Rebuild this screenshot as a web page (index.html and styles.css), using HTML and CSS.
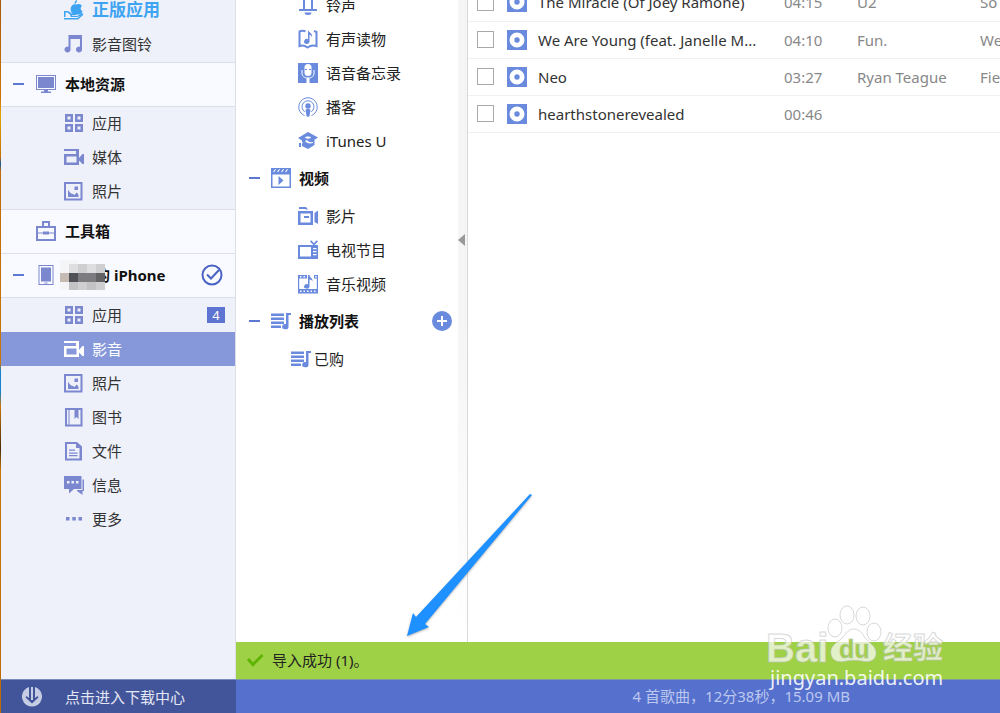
FILE: index.html
```html
<!DOCTYPE html>
<html lang="zh-CN">
<head>
    <meta charset="UTF-8" />
    <meta name="viewport" content="width=device-width, initial-scale=1.0"/>
    <title>影音</title>
    <link rel="stylesheet" href="styles.css">
</head>
<body>
<svg class="sprite" aria-hidden="true">
    <symbol id="i-apple" viewBox="0 0 20 20">
        <path d="M13 0c.2 2-1 3.600-2.600 3.800C10.300 2 11.500.5 13 0zM13 4.500c2-1 4-.3 5 1.500-2 1.300-1.600 4.200.6 5.200-.8 2-2 3.300-3.300 3.300H9C7 12.500 6 9.500 7 7c1-2.300 3-3.500 6-2.500z"/>
        <path d="M0 11h3c2 0 3 1 4.500 2.500h4c1.500 0 1.500 1.500 0 1.800H8v.7h5l4.500-2.500c1.500-.6 2.500.7 1.300 1.800L14 19.500H0V18h13.500l3-2.400-3 1.400H6.500v-2L3.500 12.500H1.500V17H0z"/>
    </symbol>
    <symbol id="i-music" viewBox="0 0 20 20">
        <path d="M4.500 1H18v14.500a3 3 0 1 1-2-2.800V5H6.500v10.500a3 3 0 1 1-2-2.800z"/>
    </symbol>
    <symbol id="i-monitor" viewBox="0 0 20 20">
        <path fill-rule="evenodd" d="M0 1h20v15H0zM1 2v13h18V2z"/>
        <path d="M2 3h16v11H2zM8 16h4v1.500h3V19H5v-1.500h3z"/>
    </symbol>
    <symbol id="i-grid" viewBox="0 0 20 20">
        <path fill-rule="evenodd" d="M1 1h8v8H1zM3.500 3.500v3h3v-3zM11 1h8v8h-8zM13.500 3.500v3h3v-3zM1 11h8v8H1zM3.500 13.500v3h3v-3zM11 11h8v8h-8zM13.500 13.500v3h3v-3z"/>
    </symbol>
    <symbol id="i-media" viewBox="0 0 20 20">
        <path fill-rule="evenodd" d="M0 2h15v16H0V7h12V4H0zM2.500 9.500v6h10v-6zM15 11l3.500-4H20v10h-1.500L15 13.500z"/>
    </symbol>
    <symbol id="i-photo" viewBox="0 0 20 20">
        <path fill-rule="evenodd" d="M0 1h18.500v18.500H0zM2 3v14.500h14.500V3z"/>
        <path d="M10.500 5.500h3.500V9h-3.500zM4 9l3 3.500 2 .5 1.500 1 2-2.500 2 2V16H4z"/>
    </symbol>
    <symbol id="i-toolbox" viewBox="0 0 20 20">
        <path fill-rule="evenodd" d="M6 0h8v5h6v15H0V5h6zM8 2v3h4V2zM2 7v4.500h5V10.500h6v1H18V7zM2 12.500V18h16v-5.500h-5v1H7v-1z"/>
    </symbol>
    <symbol id="i-phone" viewBox="0 0 20 20">
        <path fill-rule="evenodd" d="M2.500 0h15v20h-15zM3.500 1v18h13V1z"/>
        <path d="M5 2.500h10v14H5zM8.500 17.500h3v1h-3z"/>
    </symbol>
    <symbol id="i-book" viewBox="0 0 20 20">
        <path fill-rule="evenodd" d="M1 1h17.500v18.500H1zM3 3v14.500h1.500V3zM5.500 3v14.500h11V3h-2v9l-2-2-2 2V3z"/>
    </symbol>
    <symbol id="i-file" viewBox="0 0 20 20">
        <path fill-rule="evenodd" d="M1 1h12l5 4.500V19.500H1zM3 3v14.500h12.500V7H12V3z"/>
        <path d="M5 8.500h6v1.200H5zM5 11.500h8.500v1.200H5zM5 14h8.500v1.200H5z"/>
    </symbol>
    <symbol id="i-chat" viewBox="0 0 20 20">
        <path fill-rule="evenodd" d="M0 1h17.500v13H10l-5 4.500V14H0zM3 6v2.500h2.500V6zM7.500 6v2.500H10V6zM12 6v2.500h2.500V6z"/>
        <path d="M18.500 4.500H20V16h-1.500v4L13 16v-1h5.500z"/>
    </symbol>
    <symbol id="i-more" viewBox="0 0 20 20">
        <path d="M2 8h3.500v3.500H2zM8.300 8h3.500v3.500H8.300zM14.500 8H18v3.500h-3.500z"/>
    </symbol>
    <symbol id="i-check" viewBox="0 0 22 22">
        <circle class="line" cx="11" cy="11" r="9.500"/>
        <path class="line" d="M6 10.500l4 4 8-8.500"/>
    </symbol>
    <symbol id="i-bell" viewBox="0 0 20 20">
        <path class="line" d="M6 15V6c0-2.500 2-4 4-4s4 1.500 4 4v9M1 15h18"/>
        <path d="M6.500 17.500h7a3.500 2.500 0 0 1-7 0z"/>
    </symbol>
    <symbol id="i-audiobook" viewBox="0 0 20 20">
        <path class="line" d="M7.500 2.500C6 1.500 3.500 1.500 1.500 2.500v14.500c2.500-1 5-.8 8 1.500 3-2.300 6-2.500 9-1.500V3L16 2"/>
        <path d="M10 1c.5 2.500 5 3 4 7.500-.5-2-1.500-2.500-2.500-2.700V12.500a2.700 2.500 0 1 1-1.500-2.300z"/>
    </symbol>
    <symbol id="i-memo" viewBox="0 0 20 20">
        <path d="M0 0h20v20H0z"/>
        <rect class="paper" x="6.500" y="1" width="7" height="12" rx="3.500"/>
        <path class="paper-line" d="M4 7v3c0 3.500 2.500 5 6 5s6-1.500 6-5V7"/>
        <path class="paper" d="M8.500 15h3v5h-3z"/>
        <path d="M7 6h2v1H7zM11 6h2v1h-2z"/>
    </symbol>
    <symbol id="i-podcast" viewBox="0 0 20 20">
        <path class="thin" d="M6.500 18.500a9.200 9.200 0 1 1 7 0M6.800 14.800a6 6 0 1 1 6.400 0"/>
        <circle cx="10" cy="9" r="2.700"/>
        <path d="M7.500 13c0-1.500 5-1.500 5 0l-1 6c-.3 1-2.700 1-3 0z"/>
    </symbol>
    <symbol id="i-itunesu" viewBox="0 0 20 20">
        <path fill-rule="evenodd" d="M10 1l10 5.500-3.500 2.300V14l-6.500 4-6-3v-2.500l1-.5-1-1V9.500L0 7zM7 6.500c0 1.500 6 1.500 6 0s-6-1.500-6 0zM7 10c1.500 2 4 3 8 2v-1c-2.500.5-4.500 0-6-2z"/>
        <path d="M1 12h2v4H1z"/>
    </symbol>
    <symbol id="i-video" viewBox="0 0 20 20">
        <path fill-rule="evenodd" d="M0 0h20v20H0zM1.500 6.500v12h17v-12zM2 4h1.200l2-2.800H4zM6 4h1.200l2-2.800H8zM10 4h1.200l2-2.800H12zM14 4h1.200l2-2.800H16z"/>
        <path d="M7.500 8l5 4.500-5 4.500z"/>
    </symbol>
    <symbol id="i-movie" viewBox="0 0 20 20">
        <path fill-rule="evenodd" d="M0 5h15v14H0zM2.500 7.500v9h10v-9zM6 10h5v2H6zM1 1h7l2 2.500H8L7 3H1zM16.500 7L20 4.500V18l-3.500-2z"/>
    </symbol>
    <symbol id="i-tv" viewBox="0 0 20 20">
        <path fill-rule="evenodd" d="M0 5h15.500L12 1.500l1.200-1.200 2.800 3 2.600-3L20 1.500 16.500 5H20v14H0zM2 7v9.500h11V7zM15 8v1.200h3.500V8zM15 11v1.200h3.500V11zM15 14v1.200h3.500V14z"/>
    </symbol>
    <symbol id="i-mv" viewBox="0 0 20 20">
        <path fill-rule="evenodd" d="M0 1h9v3.500H1.200V15h17.600V4.500H16V1h4v18.500H0zM2 2v1.500h1.500V2zM5.500 2v1.500H7V2zM17.200 2v1.500h1.500V2zM2 16.500V18h1.500v-1.500zM5.500 16.500V18H7v-1.500zM9 16.500V18h1.500v-1.500zM12.500 16.500V18H14v-1.500zM16 16.500V18h1.500v-1.500z"/>
        <path d="M10 1h1.500c0 2.500 3.500 3 3 6.500-.7-1.500-1.500-1.800-3-2v7a2.700 2.300 0 1 1-1.500-2.200z"/>
    </symbol>
    <symbol id="i-playlist" viewBox="0 0 20 20">
        <path d="M0 2.500h13V5H0zM0 6.500h13V9H0zM0 10.500h13V13H0zM0 14.500h10V17H0zM15 2h5v2h-2.500v11.500a3.200 2.700 0 1 1-2.500-2.500z"/>
    </symbol>
    <symbol id="i-plus" viewBox="0 0 20 20">
        <path fill-rule="evenodd" d="M10 0a10 10 0 1 1 0 20 10 10 0 0 1 0-20zM9 5v4H5v2h4v4h2v-4h4V9h-4V5z"/>
    </symbol>
    <symbol id="i-disc" viewBox="0 0 20 20">
        <path fill-rule="evenodd" d="M0 0h20v20H0zM10 2.500a7.500 7.500 0 1 0 0 15 7.500 7.500 0 0 0 0-15z"/>
        <circle cx="10" cy="10" r="2.700"/>
    </symbol>
    <symbol id="i-download" viewBox="0 0 20 20">
        <path fill-rule="evenodd" d="M7 0a10 10 0 1 0 6 0v11l2.500-2 1 1.500-6.500 6-6.500-6L4.500 9 7 11z"/>
        <path d="M9 0h2v13H9z"/>
    </symbol>
</svg>

<div class="app">
    <nav class="sidebar">
        <ul class="menu menu-top">
            <li><a class="promo" href="#"><svg class="icon"><use href="#i-apple"/></svg>正版应用</a></li>
            <li><a href="#"><svg class="icon"><use href="#i-music"/></svg>影音图铃</a></li>
        </ul>

        <div class="section">
            <button class="toggle" aria-label="收起"></button>
            <svg class="icon"><use href="#i-monitor"/></svg>
            <h2>本地资源</h2>
        </div>
        <ul class="menu">
            <li><a href="#"><svg class="icon"><use href="#i-grid"/></svg>应用</a></li>
            <li><a href="#"><svg class="icon"><use href="#i-media"/></svg>媒体</a></li>
            <li><a href="#"><svg class="icon"><use href="#i-photo"/></svg>照片</a></li>
        </ul>

        <div class="section no-toggle">
            <svg class="icon"><use href="#i-toolbox"/></svg>
            <h2>工具箱</h2>
        </div>

        <div class="section">
            <button class="toggle" aria-label="收起"></button>
            <svg class="icon"><use href="#i-phone"/></svg>
            <h2 class="device">
                <svg class="mosaic" viewBox="0 0 45 30" aria-hidden="true">
                    <path fill="#f5f5f7" d="M0 0h18v4H0zM0 4h9v9H0zM0 22h9v8H0z"/>
                    <path fill="#dedee0" d="M9 4h9v9H9zM27 4h9v9h-9z"/>
                    <path fill="#cfcfd1" d="M18 4h9v9h-9zM36 4h9v9h-9zM18 22h9v8h-9zM36 22h9v8h-9z"/>
                    <path fill="#c3c3c6" d="M9 22h9v8H9zM27 22h9v8h-9z"/>
                    <path fill="#c5bbb2" d="M0 13h9v9H0z"/>
                    <path fill="#505156" d="M9 13h9v9H9z"/>
                    <path fill="#7c7c80" d="M18 13h18v9H18z"/>
                    <path fill="#636365" d="M36 13h9v9h-9z"/>
                </svg>的 iPhone
            </h2>
            <svg class="connected"><use href="#i-check"/></svg>
        </div>
        <ul class="menu menu-device">
            <li><a href="#"><svg class="icon"><use href="#i-grid"/></svg>应用<span class="badge">4</span></a></li>
            <li><a class="active" href="#"><svg class="icon"><use href="#i-media"/></svg>影音</a></li>
            <li><a href="#"><svg class="icon"><use href="#i-photo"/></svg>照片</a></li>
            <li><a href="#"><svg class="icon"><use href="#i-book"/></svg>图书</a></li>
            <li><a href="#"><svg class="icon"><use href="#i-file"/></svg>文件</a></li>
            <li><a href="#"><svg class="icon"><use href="#i-chat"/></svg>信息</a></li>
            <li><a href="#"><svg class="icon"><use href="#i-more"/></svg>更多</a></li>
        </ul>
    </nav>

    <div class="content">
        <div class="panes">
            <nav class="library">
                <div class="library-list">
                    <ul>
                        <li><a href="#"><svg class="icon"><use href="#i-bell"/></svg>铃声</a></li>
                        <li><a href="#"><svg class="icon"><use href="#i-audiobook"/></svg>有声读物</a></li>
                        <li><a href="#"><svg class="icon"><use href="#i-memo"/></svg>语音备忘录</a></li>
                        <li><a href="#"><svg class="icon"><use href="#i-podcast"/></svg>播客</a></li>
                        <li><a href="#"><svg class="icon"><use href="#i-itunesu"/></svg>iTunes U</a></li>
                    </ul>
                    <div class="group">
                        <button class="toggle" aria-label="收起"></button>
                        <svg class="icon"><use href="#i-video"/></svg>
                        <h2>视频</h2>
                    </div>
                    <ul>
                        <li><a href="#"><svg class="icon"><use href="#i-movie"/></svg>影片</a></li>
                        <li><a href="#"><svg class="icon"><use href="#i-tv"/></svg>电视节目</a></li>
                        <li><a href="#"><svg class="icon"><use href="#i-mv"/></svg>音乐视频</a></li>
                    </ul>
                    <div class="group">
                        <button class="toggle" aria-label="收起"></button>
                        <svg class="icon"><use href="#i-playlist"/></svg>
                        <h2>播放列表</h2>
                        <button class="add" aria-label="新建"><svg class="icon"><use href="#i-plus"/></svg></button>
                    </div>
                    <ul class="playlists">
                        <li><a href="#"><svg class="icon"><use href="#i-playlist"/></svg>已购</a></li>
                    </ul>
                </div>
                <button class="splitter" aria-label="收起"></button>
            </nav>

            <main class="songs">
                <table>
                    <colgroup>
                        <col class="col-check"><col class="col-icon"><col class="col-title">
                        <col class="col-time"><col class="col-artist"><col>
                    </colgroup>
                    <tbody>
                        <tr>
                            <td><input type="checkbox" aria-label="The Miracle (Of Joey Ramone)"></td>
                            <td><svg class="icon"><use href="#i-disc"/></svg></td>
                            <td class="title">The Miracle (Of Joey Ramone)</td>
                            <td>04:15</td><td>U2</td><td>So</td>
                        </tr>
                        <tr>
                            <td><input type="checkbox" aria-label="We Are Young"></td>
                            <td><svg class="icon"><use href="#i-disc"/></svg></td>
                            <td class="title">We Are Young (feat. Janelle M...</td>
                            <td>04:10</td><td>Fun.</td><td>We</td>
                        </tr>
                        <tr>
                            <td><input type="checkbox" aria-label="Neo"></td>
                            <td><svg class="icon"><use href="#i-disc"/></svg></td>
                            <td class="title">Neo</td>
                            <td>03:27</td><td>Ryan Teague</td><td>Fie</td>
                        </tr>
                        <tr>
                            <td><input type="checkbox" aria-label="hearthstonerevealed"></td>
                            <td><svg class="icon"><use href="#i-disc"/></svg></td>
                            <td class="title">hearthstonerevealed</td>
                            <td>00:46</td><td></td><td></td>
                        </tr>
                    </tbody>
                </table>
            </main>
        </div>

        <div class="notice" role="status">
            <svg class="tick" viewBox="0 0 18 14"><path d="M2 6l5 5.500L16.500 2"/></svg>
            导入成功 (1)。
            <svg class="pointer" viewBox="0 0 130 148" aria-hidden="true">
                <path d="M127 1l2 1L22 131l4 3-22 9 6-23 3 4z"/>
            </svg>
        </div>
    </div>

    <a class="downloads" href="#"><svg class="icon"><use href="#i-download"/></svg>点击进入下载中心</a>
    <footer class="status">4 首歌曲，12分38秒，15.09 MB</footer>
</div>

<svg class="watermark" viewBox="0 0 184 88" role="img" aria-label="Baidu 经验">
    <g class="mark">
        <text class="brand" x="1" y="57">Bai</text>
        <ellipse cx="70" cy="23" rx="7" ry="9"/>
        <ellipse cx="82" cy="10" rx="7" ry="9"/>
        <ellipse cx="98" cy="11" rx="7" ry="9"/>
        <ellipse cx="109" cy="27" rx="7" ry="9"/>
        <path class="pad" d="M89 24c-7 0-9 7-14 11-6 4-10 8-9 14 1 7 8 9 15 7 5-1 11-1 16 0 8 2 14-1 14-8 0-6-5-9-9-13-4-4-6-11-13-11z"/>
        <text class="du" x="74" y="53">du</text>
        <text class="jingyan" x="118" y="53">经验</text>
    </g>
    <text class="site" x="5" y="80">jingyan.baidu.com</text>
</svg>
</body>
</html>
```
FILE: styles.css
```css
* {
    margin: 0;
    padding: 0;
    box-sizing: border-box;
}

body {
    background-color: #fff;
    color: #222;
    font-family: "Noto Sans", "Noto Sans CJK SC", sans-serif;
    font-size: 15px;
    line-height: 20px;
    overflow: hidden;
}

ul {
    list-style: none;
}

a {
    color: inherit;
    text-decoration: none;
}

h2 {
    font-size: 15px;
    font-weight: bold;
    color: #111;
}

button {
    border: none;
    background: none;
    font: inherit;
    cursor: pointer;
}

.sprite {
    display: none;
}

.icon {
    display: block;
    flex: none;
    width: 20px;
    height: 20px;
    fill: currentColor;
}

.line,
.thin {
    fill: none;
    stroke: currentColor;
    stroke-width: 2px;
}

.thin {
    stroke-width: 1px;
}

.paper {
    fill: #fff;
}

.paper-line {
    fill: none;
    stroke: #fff;
    stroke-width: 1px;
}

.app {
    display: grid;
    grid-template-columns: 235px 1fr;
    grid-template-rows: 1fr 34px;
    height: 100vh;
    padding-left: 1px;
    background: linear-gradient(#a85a08, #cf7405 14%, #e0a500 16%, #c66f05 22%, #0f5aa5 23%, #c06a08 24%, #c87606 51%, #1483cf 52%, #1483cf 55%, #c87606 57%, #4a2c08 63%, #c87606 66%, #c06a08);
}

/* Sidebar */
.sidebar {
    min-height: 0;
    overflow: hidden;
    background-color: #eef0fa;
    border-right: 1px solid #dcdfea;
}

.menu a {
    display: flex;
    align-items: center;
    gap: 8px;
    height: 34px;
    padding: 0 10px 2px 63px;
    color: #333;
}

.menu-device a {
    padding-bottom: 0;
}

.menu .icon,
.section .icon {
    color: #7b87cf;
}

.menu-top {
    margin-top: -6px;
}

.menu .promo,
.menu .promo .icon {
    color: #3ea4f2;
}

.menu .promo {
    font-size: 17px;
    font-weight: bold;
}

.menu .active {
    background-color: #8698da;
    color: #fff;
}

.menu .active .icon {
    color: #fff;
}

.badge {
    width: 18px;
    height: 16px;
    margin-left: auto;
    background-color: #5d74d2;
    color: #fff;
    font-size: 13px;
    line-height: 16px;
    text-align: center;
}

.section {
    display: flex;
    align-items: center;
    gap: 9px;
    height: 44px;
    padding: 0 12px 2px;
    background-color: #f9faff;
    border-top: 1px solid #dcdfea;
}

.section + .menu {
    border-top: 1px solid #dcdfea;
}

.no-toggle {
    padding-left: 35px;
}

.toggle {
    flex: none;
    width: 14px;
    height: 20px;
}

.toggle::before {
    content: "";
    display: block;
    width: 11px;
    height: 2px;
    background-color: #5d78d3;
}

.device {
    display: flex;
    align-items: center;
    white-space: nowrap;
}

.mosaic {
    position: relative;
    width: 45px;
    height: 30px;
    margin: 0 -10px 0 -5px;
}

.connected {
    width: 22px;
    height: 22px;
    margin-left: auto;
    color: #4a63c2;
}

/* Library */
.content {
    display: flex;
    flex-direction: column;
    min-width: 0;
    min-height: 0;
}

.panes {
    display: flex;
    flex: 1;
    min-height: 0;
    overflow: hidden;
    background-color: #fff;
}

.library {
    display: flex;
    flex: none;
    width: 232px;
    border-right: 1px solid #d9d9d9;
}

.library-list {
    flex: 1;
    margin-top: -12px;
}

.library-list a {
    display: flex;
    align-items: center;
    gap: 8px;
    height: 34px;
    padding-left: 62px;
}

.library .icon {
    color: #6a8ade;
}

.library-list .playlists a {
    gap: 3px;
    padding-left: 55px;
}

.group {
    display: flex;
    align-items: center;
    gap: 8px;
    height: 41px;
    padding: 0 6px 2px 13px;
}

.add {
    margin-left: auto;
}

.splitter {
    display: flex;
    align-items: flex-start;
    width: 9px;
    padding-top: 234px;
    background: linear-gradient(#f5f5f5 50%, #fff);
}

.splitter::before {
    content: "";
    border: 6px solid transparent;
    border-right: 7px solid #999;
    border-left: none;
}

/* Songs */
.songs {
    flex: 1;
    min-width: 0;
    margin-top: -16px;
}

table {
    width: 100%;
    table-layout: fixed;
    border-collapse: collapse;
}

td {
    height: 37px;
    border-bottom: 1px solid #f1f1f1;
    color: #888;
    white-space: nowrap;
    overflow: hidden;
}

td .icon {
    color: #6a8ade;
}

td.title {
    color: #333;
}

.col-check {
    width: 39px;
}

.col-icon {
    width: 31px;
}

.col-title {
    width: 246px;
}

.col-time {
    width: 73px;
}

.col-artist {
    width: 123px;
}

input[type="checkbox"] {
    appearance: none;
    display: block;
    width: 17px;
    height: 17px;
    margin-left: 9px;
    border: 1px solid #aaa;
    background-color: #fff;
}

/* Import notice */
.notice {
    position: relative;
    display: flex;
    align-items: center;
    gap: 8px;
    height: 37px;
    padding: 0 10px 2px;
    background-color: #9fd146;
    color: #222;
}

.tick {
    width: 18px;
    height: 14px;
    fill: none;
    stroke: #5fb404;
    stroke-width: 3px;
}

.pointer {
    position: absolute;
    left: 167px;
    bottom: 38px;
    width: 130px;
    height: 148px;
    fill: #1e90ff;
    filter: drop-shadow(0 1px 1px rgba(0, 0, 0, 0.3));
}

/* Bottom bar */
.downloads {
    display: flex;
    align-items: center;
    gap: 23px;
    padding-left: 21px;
    background-color: #43559a;
    border-top: 1px solid #7a8abb;
    color: #e3e7f5;
}

.downloads .icon {
    color: #c6cce4;
}

.status {
    padding: 6px 150px 0 0;
    background-color: #5670cd;
    border-top: 1px solid #7f9ba0;
    color: #bcc8ef;
    text-align: right;
}

.watermark {
    position: absolute;
    right: 51px;
    bottom: 20px;
    width: 184px;
    height: 88px;
    pointer-events: none;
}

.mark {
    fill: rgba(255, 255, 255, 0.7);
    stroke: rgba(190, 190, 190, 0.6);
    stroke-width: 1px;
    font-weight: bold;
}

.brand {
    font-family: "Liberation Sans", sans-serif;
    font-size: 40px;
}

.du {
    fill: #9fd146;
    font-family: "Liberation Sans", sans-serif;
    font-size: 25px;
}

.jingyan {
    font-family: "Noto Sans CJK SC", sans-serif;
    font-size: 30px;
}

.site {
    fill: rgba(255, 255, 255, 0.9);
    font-size: 20px;
}
```
